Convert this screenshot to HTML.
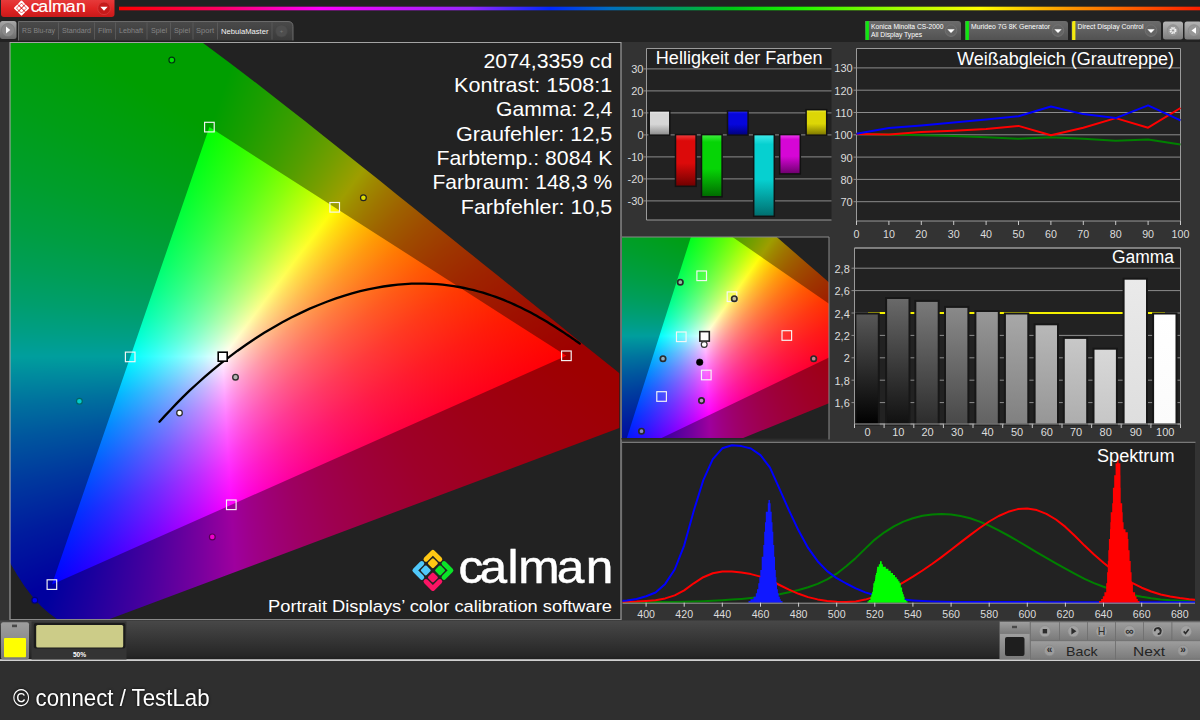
<!DOCTYPE html>
<html lang="de"><head><meta charset="utf-8"><title>Calman</title>
<style>
html,body{margin:0;padding:0;}
body{width:1200px;height:720px;overflow:hidden;background:#333;position:relative;font-family:'Liberation Sans', sans-serif;}
#c1,#c2,svg#ov{position:absolute;}
#c1{left:10px;top:43px;width:610px;height:576px;background-color:#fff;background-image:conic-gradient(from 0deg at 41.90px 541.57px,#00ffff 0deg,#00ffff 19.026deg,#2fffff 23.5deg,#60ffff 27.5deg,#8bffff 30.5deg,#bdffff 33.5deg,#edffff 36deg,#fffeff 36.888deg,#ffdeff 38.5deg,#ffbdff 40.5deg,#ff9aff 43deg,#ff79ff 46deg,#ff5aff 49.5deg,#ff3aff 54deg,#ff1cff 59.5deg,#ff00ff 66.067deg,#ff00ff 198.966deg,#0000ff 198.996deg,#0000ff 246.037deg,#00ffff 246.067deg,#00ffff 360deg),conic-gradient(from 0deg at 199.40px 84.08px,#00ff00 0deg,#00ff00 18.966deg,#ffff00 18.996deg,#ffff01 123deg,#ffff26 138.5deg,#ffff45 149deg,#ffff63 156.5deg,#ffff81 162.5deg,#ffff9e 167deg,#ffffbf 171deg,#ffffdd 174deg,#ffffff 176.702deg,#bfffff 181.5deg,#78ffff 187.5deg,#2dffff 194.5deg,#00ffff 199.026deg,#00ffff 302.647deg,#00ff00 302.677deg,#00ff00 360deg),conic-gradient(from 0deg at 556.40px 312.82px,#ffff00 0deg,#ffff00 66.067deg,#ff0000 66.5deg,#ff0000 122.617deg,#ff00ff 122.647deg,#ff01ff 246.067deg,#ff2eff 252deg,#ff5cff 257deg,#ff8bff 261.5deg,#ffb6ff 265deg,#ffe2ff 268deg,#fffffe 269.894deg,#ffffd6 272.5deg,#ffffb0 275.5deg,#ffff8c 279deg,#ffff6a 283deg,#ffff48 288deg,#ffff24 294.5deg,#ffff00 302.677deg,#ffff00 360deg);background-blend-mode:darken;}
#c2{left:622px;top:237px;width:207px;height:201px;background-color:#fff;background-image:conic-gradient(from 0deg at -1.39px 220.66px,#00ffff 0deg,#00ffff 17.699deg,#30ffff 22deg,#5dffff 25.5deg,#8affff 28.5deg,#bdffff 31.5deg,#efffff 34deg,#fffeff 34.778deg,#ffdbff 36.5deg,#ffbaff 38.5deg,#ff98ff 41deg,#ff77ff 44deg,#ff58ff 47.5deg,#ff39ff 52deg,#ff1cff 57.5deg,#ff00ff 64.374deg,#ff00ff 197.639deg,#0000ff 197.669deg,#0000ff 244.344deg,#00ffff 244.374deg,#00ffff 360deg),conic-gradient(from 0deg at 76.41px -23.58px,#00ff00 0deg,#00ff00 17.639deg,#ffff00 17.669deg,#ffff01 125deg,#ffff22 139.5deg,#ffff40 149.5deg,#ffff5e 157deg,#ffff7a 162.5deg,#ffff97 167deg,#ffffb3 170.5deg,#ffffd2 173.5deg,#fffff2 176deg,#ffffff 176.95deg,#bdffff 181.5deg,#77ffff 187deg,#2cffff 193.5deg,#00ffff 197.699deg,#00ffff 304.699deg,#00ff00 304.729deg,#00ff00 360deg),conic-gradient(from 0deg at 252.77px 98.54px,#ffff00 0deg,#ffff00 64.374deg,#ff0000 64.5deg,#ff0000 124.669deg,#ff00ff 124.699deg,#ff00ff 244.374deg,#ff31ff 251deg,#ff60ff 256.5deg,#ff8dff 261deg,#ffbbff 265deg,#ffebff 268.5deg,#fffffe 269.883deg,#ffffd9 272.5deg,#ffffb5 275.5deg,#ffff92 279deg,#ffff6e 283.5deg,#ffff4a 289deg,#ffff25 296deg,#ffff00 304.729deg,#ffff00 360deg);background-blend-mode:darken;}
svg#ov{left:0;top:0;}
svg text{font-family:'Liberation Sans', sans-serif;}
</style></head>
<body>
<div id="c1"></div><div id="c2"></div>
<svg id="ov" width="1200" height="720" viewBox="0 0 1200 720"><defs><clipPath id="clipA"><rect x="10" y="43" width="610" height="576"/></clipPath><clipPath id="clipB"><rect x="622" y="237" width="207" height="201"/></clipPath><linearGradient id="gred" x1="0" y1="0" x2="0" y2="1"><stop offset="0" stop-color="#e63a3a"/><stop offset="0.5" stop-color="#e02424"/><stop offset="1" stop-color="#c81a1a"/></linearGradient><linearGradient id="rainbow" gradientUnits="userSpaceOnUse" x1="119" y1="0" x2="1200" y2="0"><stop offset="0" stop-color="#ff0000"/><stop offset="0.093" stop-color="#ff0064"/><stop offset="0.186" stop-color="#ff00ff"/><stop offset="0.325" stop-color="#9628ff"/><stop offset="0.399" stop-color="#0028ff"/><stop offset="0.454" stop-color="#006ebe"/><stop offset="0.496" stop-color="#008c82"/><stop offset="0.568" stop-color="#00c814"/><stop offset="0.63" stop-color="#1ef500"/><stop offset="0.72" stop-color="#a0ff00"/><stop offset="0.796" stop-color="#ffff00"/><stop offset="0.88" stop-color="#ff9600"/><stop offset="1" stop-color="#ff1e00"/></linearGradient><linearGradient id="gbtn" x1="0" y1="0" x2="0" y2="1"><stop offset="0" stop-color="#a8a8a8"/><stop offset="1" stop-color="#6a6a6a"/></linearGradient><linearGradient id="gtab" x1="0" y1="0" x2="0" y2="1"><stop offset="0" stop-color="#4a4a4a"/><stop offset="1" stop-color="#3a3a3a"/></linearGradient><linearGradient id="gbtn2" x1="0" y1="0" x2="0" y2="1"><stop offset="0" stop-color="#b6b6b6"/><stop offset="1" stop-color="#7c7c7c"/></linearGradient><linearGradient id="gdd" x1="0" y1="0" x2="0" y2="1"><stop offset="0" stop-color="#6c6c6c"/><stop offset="1" stop-color="#525252"/></linearGradient><linearGradient id="hbw" x1="0" y1="0" x2="0" y2="1"><stop offset="0" stop-color="#f2f2f2"/><stop offset="0.12" stop-color="#d6d6d6"/><stop offset="0.55" stop-color="#d6d6d6"/><stop offset="1" stop-color="#8a8a8a"/></linearGradient><linearGradient id="hbr" x1="0" y1="0" x2="0" y2="1"><stop offset="0" stop-color="#f04040"/><stop offset="0.12" stop-color="#dc0a0a"/><stop offset="0.55" stop-color="#dc0a0a"/><stop offset="1" stop-color="#6e0000"/></linearGradient><linearGradient id="hbg" x1="0" y1="0" x2="0" y2="1"><stop offset="0" stop-color="#40ee40"/><stop offset="0.12" stop-color="#06d406"/><stop offset="0.55" stop-color="#06d406"/><stop offset="1" stop-color="#006a00"/></linearGradient><linearGradient id="hbb" x1="0" y1="0" x2="0" y2="1"><stop offset="0" stop-color="#3030f0"/><stop offset="0.12" stop-color="#0606dc"/><stop offset="0.55" stop-color="#0606dc"/><stop offset="1" stop-color="#000078"/></linearGradient><linearGradient id="hbc" x1="0" y1="0" x2="0" y2="1"><stop offset="0" stop-color="#40eaea"/><stop offset="0.12" stop-color="#06d0d0"/><stop offset="0.55" stop-color="#06d0d0"/><stop offset="1" stop-color="#006e6e"/></linearGradient><linearGradient id="hbm" x1="0" y1="0" x2="0" y2="1"><stop offset="0" stop-color="#f040f0"/><stop offset="0.12" stop-color="#d606d6"/><stop offset="0.55" stop-color="#d606d6"/><stop offset="1" stop-color="#6c006c"/></linearGradient><linearGradient id="hby" x1="0" y1="0" x2="0" y2="1"><stop offset="0" stop-color="#f0f040"/><stop offset="0.12" stop-color="#dcd606"/><stop offset="0.55" stop-color="#dcd606"/><stop offset="1" stop-color="#7a7400"/></linearGradient><linearGradient id="gb0" x1="0" y1="0" x2="0" y2="1"><stop offset="0" stop-color="#585858"/><stop offset="1" stop-color="#000000"/></linearGradient><linearGradient id="gb1" x1="0" y1="0" x2="0" y2="1"><stop offset="0" stop-color="#6a6a6a"/><stop offset="1" stop-color="#101010"/></linearGradient><linearGradient id="gb2" x1="0" y1="0" x2="0" y2="1"><stop offset="0" stop-color="#7a7a7a"/><stop offset="1" stop-color="#2c2c2c"/></linearGradient><linearGradient id="gb3" x1="0" y1="0" x2="0" y2="1"><stop offset="0" stop-color="#8a8a8a"/><stop offset="1" stop-color="#484848"/></linearGradient><linearGradient id="gb4" x1="0" y1="0" x2="0" y2="1"><stop offset="0" stop-color="#989898"/><stop offset="1" stop-color="#626262"/></linearGradient><linearGradient id="gb5" x1="0" y1="0" x2="0" y2="1"><stop offset="0" stop-color="#a8a8a8"/><stop offset="1" stop-color="#808080"/></linearGradient><linearGradient id="gb6" x1="0" y1="0" x2="0" y2="1"><stop offset="0" stop-color="#b8b8b8"/><stop offset="1" stop-color="#969696"/></linearGradient><linearGradient id="gb7" x1="0" y1="0" x2="0" y2="1"><stop offset="0" stop-color="#c8c8c8"/><stop offset="1" stop-color="#adadad"/></linearGradient><linearGradient id="gb8" x1="0" y1="0" x2="0" y2="1"><stop offset="0" stop-color="#d8d8d8"/><stop offset="1" stop-color="#c6c6c6"/></linearGradient><linearGradient id="gb9" x1="0" y1="0" x2="0" y2="1"><stop offset="0" stop-color="#eaeaea"/><stop offset="1" stop-color="#dedede"/></linearGradient><linearGradient id="gb10" x1="0" y1="0" x2="0" y2="1"><stop offset="0" stop-color="#ffffff"/><stop offset="1" stop-color="#fbfbfb"/></linearGradient><clipPath id="clipS"><rect x="622.5" y="443" width="572.5" height="160.7"/></clipPath><linearGradient id="gbar" x1="0" y1="0" x2="0" y2="1"><stop offset="0" stop-color="#484848"/><stop offset="0.9" stop-color="#262626"/><stop offset="1" stop-color="#1e1e1e"/></linearGradient><linearGradient id="gbt" x1="0" y1="0" x2="0" y2="1"><stop offset="0" stop-color="#9e9e9e"/><stop offset="1" stop-color="#7a7a7a"/></linearGradient></defs><rect x="0" y="0" width="1200" height="42" fill="#222"/>
<g clip-path="url(#clipA)"><path d="M9 42 H621 V620 H9 ZM209.4 127.1 L566.4 355.8 L51.9 584.6Z" fill="#000" fill-opacity="0.38" fill-rule="evenodd"/><path d="M9 42 H621 V620 H9 ZM77.2 631.2 L77.2 631.2 L77.1 631.2 L77.0 631.2 L76.9 631.2 L76.8 631.2 L76.6 631.2 L76.5 631.3 L76.4 631.3 L76.3 631.4 L76.1 631.4 L75.8 631.3 L75.6 631.3 L75.4 631.3 L75.1 631.3 L74.8 631.2 L74.4 631.1 L73.8 630.8 L73.2 630.5 L72.5 630.1 L71.7 629.6 L70.7 628.9 L69.6 628.2 L68.4 627.2 L67.0 626.2 L65.4 625.0 L63.6 623.7 L61.4 622.2 L58.9 620.4 L56.1 618.4 L52.9 616.1 L49.4 613.4 L45.6 610.2 L41.4 606.4 L36.7 601.6 L31.2 595.0 L24.7 586.4 L17.5 575.5 L9.5 561.8 L0.4 544.5 L-9.7 523.0 L-21.1 496.9 L-33.5 465.3 L-45.7 428.3 L-57.9 385.5 L-69.9 337.5 L-81.0 285.8 L-90.1 232.5 L-97.0 179.2 L-101.0 128.1 L-101.5 80.6 L-98.2 37.4 L-91.0 -0.2 L-79.6 -30.4 L-64.8 -52.5 L-47.0 -65.5 L-27.6 -71.0 L-6.9 -69.8 L14.3 -64.6 L35.8 -56.6 L56.9 -47.3 L77.2 -37.3 L96.9 -26.8 L116.4 -15.5 L135.5 -3.7 L154.6 8.8 L173.5 21.8 L192.3 35.2 L211.1 48.9 L229.9 62.9 L248.6 77.2 L267.4 91.7 L286.2 106.4 L304.9 121.1 L323.6 135.9 L342.2 150.7 L360.7 165.4 L379.0 180.1 L397.1 194.7 L415.0 209.1 L432.5 223.2 L449.7 237.0 L466.4 250.4 L482.6 263.4 L498.3 276.0 L513.3 288.1 L527.5 299.5 L540.5 310.0 L552.8 319.8 L564.3 329.1 L575.0 337.7 L584.7 345.4 L593.5 352.4 L601.3 358.8 L608.5 364.5 L614.8 369.6 L620.5 374.2 L625.5 378.2 L630.0 381.8 L634.0 385.0 L637.7 388.0 L641.1 390.7 L644.1 393.2 L646.9 395.4 L649.4 397.4 L651.6 399.2 L653.6 400.8 L655.2 402.1 L656.7 403.3 L658.0 404.3 L659.1 405.2 L660.0 406.0 L660.9 406.6 L661.5 407.1 L662.0 407.6 L662.5 408.0 L663.0 408.3 L663.4 408.7 L663.8 409.0 L664.1 409.3 L664.5 409.6 L664.8 409.8 L665.1 410.1 L665.4 410.3 L665.5 410.4 L665.6 410.5 L665.7 410.5 L665.8 410.6 L665.8 410.6Z" fill="#222" fill-rule="evenodd"/><path d="M579.8 343.6 L578.0 342.3 L576.1 341.0 L574.2 339.6 L572.2 338.3 L570.3 336.9 L568.2 335.5 L566.1 334.1 L564.0 332.6 L561.8 331.2 L559.5 329.7 L557.2 328.2 L554.9 326.7 L552.5 325.2 L550.0 323.7 L547.4 322.1 L544.8 320.5 L542.2 319.0 L539.4 317.4 L536.6 315.8 L533.7 314.2 L530.7 312.6 L527.6 311.0 L524.5 309.4 L521.3 307.8 L517.9 306.2 L514.5 304.6 L511.0 303.0 L507.3 301.5 L503.6 299.9 L499.7 298.4 L495.7 296.9 L491.6 295.5 L487.4 294.1 L483.0 292.7 L478.5 291.5 L473.9 290.2 L469.0 289.1 L464.1 288.0 L459.0 287.0 L453.7 286.1 L448.2 285.4 L442.6 284.7 L436.8 284.2 L430.8 283.8 L424.6 283.6 L418.2 283.6 L411.6 283.7 L404.9 284.1 L397.9 284.7 L390.7 285.5 L383.4 286.5 L375.8 287.8 L368.1 289.4 L360.2 291.2 L352.0 293.4 L343.8 295.8 L335.3 298.6 L326.8 301.7 L318.0 305.2 L309.2 308.9 L300.3 313.1 L291.3 317.5 L282.3 322.3 L273.3 327.4 L264.2 332.8 L255.3 338.5 L246.4 344.5 L237.6 350.7 L229.0 357.1 L220.5 363.7 L212.3 370.4 L204.4 377.2 L196.8 384.0 L189.5 390.7 L182.6 397.4 L176.2 403.9 L170.2 410.2 L164.6 416.1 L159.5 421.7" fill="none" stroke="#000" stroke-width="2.3" stroke-linecap="round"/></g>
<g clip-path="url(#clipB)"><path d="M621 236 H830 V439 H621 ZM698.4 213.4 L874.8 335.5 L620.6 457.7Z" fill="#000" fill-opacity="0.38" fill-rule="evenodd"/><path d="M621 236 H830 V439 H621 ZM633.1 482.6 L633.1 482.5 L633.1 482.5 L633.0 482.6 L633.0 482.6 L632.9 482.6 L632.8 482.6 L632.8 482.6 L632.7 482.6 L632.6 482.6 L632.5 482.6 L632.4 482.6 L632.3 482.6 L632.2 482.6 L632.1 482.6 L631.9 482.6 L631.7 482.5 L631.4 482.4 L631.1 482.2 L630.8 482.0 L630.4 481.7 L629.9 481.3 L629.4 480.9 L628.8 480.4 L628.1 479.9 L627.3 479.3 L626.4 478.6 L625.3 477.7 L624.0 476.8 L622.7 475.7 L621.1 474.5 L619.4 473.1 L617.5 471.4 L615.4 469.3 L613.1 466.8 L610.4 463.3 L607.2 458.7 L603.6 452.8 L599.6 445.5 L595.2 436.3 L590.2 424.8 L584.5 410.9 L578.4 394.0 L572.4 374.2 L566.3 351.4 L560.4 325.8 L555.0 298.1 L550.4 269.7 L547.0 241.3 L545.1 214.0 L544.8 188.6 L546.4 165.6 L550.0 145.5 L555.7 129.3 L563.0 117.5 L571.7 110.6 L581.3 107.7 L591.6 108.3 L602.0 111.1 L612.7 115.3 L623.1 120.3 L633.1 125.6 L642.8 131.3 L652.4 137.3 L661.9 143.6 L671.3 150.3 L680.7 157.2 L690.0 164.3 L699.2 171.7 L708.5 179.2 L717.8 186.8 L727.1 194.6 L736.3 202.4 L745.6 210.2 L754.8 218.1 L764.0 226.0 L773.1 233.9 L782.2 241.7 L791.1 249.5 L800.0 257.2 L808.6 264.7 L817.1 272.1 L825.4 279.3 L833.4 286.2 L841.1 292.9 L848.5 299.4 L855.5 305.5 L862.0 311.1 L868.0 316.3 L873.7 321.3 L879.0 325.9 L883.8 330.0 L888.1 333.7 L892.0 337.1 L895.6 340.2 L898.7 342.9 L901.5 345.3 L904.0 347.5 L906.2 349.4 L908.2 351.1 L910.0 352.7 L911.6 354.2 L913.2 355.5 L914.5 356.7 L915.8 357.7 L916.9 358.7 L917.8 359.5 L918.7 360.2 L919.4 360.9 L920.0 361.4 L920.6 361.9 L921.0 362.3 L921.4 362.7 L921.8 362.9 L922.0 363.2 L922.3 363.4 L922.5 363.6 L922.7 363.8 L922.9 363.9 L923.0 364.1 L923.2 364.2 L923.4 364.4 L923.6 364.5 L923.7 364.6 L923.7 364.7 L923.8 364.7 L923.8 364.8 L923.9 364.8 L923.9 364.8Z" fill="#222" fill-rule="evenodd"/></g>
<rect x="204.6" y="122.3" width="9.6" height="9.6" fill="none" stroke="#f6f6f6" stroke-width="1.15"/>
<rect x="561.6" y="351.0" width="9.6" height="9.6" fill="none" stroke="#f6f6f6" stroke-width="1.15"/>
<rect x="47.1" y="579.8" width="9.6" height="9.6" fill="none" stroke="#f6f6f6" stroke-width="1.15"/>
<rect x="329.9" y="202.5" width="9.6" height="9.6" fill="none" stroke="#f6f6f6" stroke-width="1.15"/>
<rect x="125.4" y="352.1" width="9.6" height="9.6" fill="none" stroke="#f6f6f6" stroke-width="1.15"/>
<rect x="226.5" y="500.0" width="9.6" height="9.6" fill="none" stroke="#f6f6f6" stroke-width="1.15"/>
<rect x="218.2" y="352.2" width="9" height="9" fill="#fff" stroke="#000" stroke-width="1.6"/>
<circle cx="171.8" cy="60.1" r="2.9" fill="#0d0" stroke="#031" stroke-width="1.2"/>
<circle cx="363.4" cy="197.7" r="2.9" fill="#dd0" stroke="#222" stroke-width="1.2"/>
<circle cx="79.4" cy="401.3" r="2.9" fill="#0cc" stroke="#066" stroke-width="1.2"/>
<circle cx="34.8" cy="600.2" r="2.9" fill="#00e" stroke="#007" stroke-width="1.2"/>
<circle cx="212.3" cy="536.9" r="2.9" fill="#e0c" stroke="#505" stroke-width="1.2"/>
<circle cx="235.5" cy="377.2" r="2.8" fill="#b4b4b4" stroke="#303030" stroke-width="1.4"/>
<circle cx="179.5" cy="413.0" r="2.8" fill="#fff" stroke="#303030" stroke-width="1.3"/>
<rect x="696.9" y="271.0" width="9.6" height="9.6" fill="none" stroke="#f6f6f6" stroke-width="1.15"/>
<rect x="727.2" y="291.9" width="9.6" height="9.6" fill="none" stroke="#f6f6f6" stroke-width="1.15"/>
<rect x="782.0" y="330.7" width="9.6" height="9.6" fill="none" stroke="#f6f6f6" stroke-width="1.15"/>
<rect x="676.5" y="332.0" width="9.6" height="9.6" fill="none" stroke="#f6f6f6" stroke-width="1.15"/>
<rect x="656.8" y="391.7" width="9.6" height="9.6" fill="none" stroke="#f6f6f6" stroke-width="1.15"/>
<rect x="701.5" y="370.2" width="9.6" height="9.6" fill="none" stroke="#f6f6f6" stroke-width="1.15"/>
<rect x="699.8" y="331.6" width="9.5" height="9.5" fill="#fff" stroke="#222" stroke-width="1.6"/>
<circle cx="680.3" cy="282.2" r="2.7" fill="rgba(175,175,175,0.75)" stroke="#2a2a2a" stroke-width="1.7"/>
<circle cx="734.3" cy="298.7" r="2.7" fill="rgba(175,175,175,0.75)" stroke="#2a2a2a" stroke-width="1.7"/>
<circle cx="663.0" cy="358.7" r="2.7" fill="rgba(175,175,175,0.75)" stroke="#2a2a2a" stroke-width="1.7"/>
<circle cx="701.5" cy="400.6" r="2.7" fill="rgba(175,175,175,0.75)" stroke="#2a2a2a" stroke-width="1.7"/>
<circle cx="813.7" cy="358.7" r="2.7" fill="rgba(175,175,175,0.75)" stroke="#2a2a2a" stroke-width="1.7"/>
<circle cx="641.5" cy="431.2" r="2.7" fill="rgba(175,175,175,0.75)" stroke="#2a2a2a" stroke-width="1.7"/>
<circle cx="704.2" cy="344.5" r="2.9" fill="#fff" stroke="#333" stroke-width="1.2"/>
<circle cx="699.7" cy="362.2" r="3.3" fill="#000" stroke="#000" stroke-width="0.5"/>
<path d="M620 43 V620" fill="none" stroke="#222" stroke-width="1.4"/>
<path d="M10 620 V42.5 H621 V620" fill="none" stroke="#a4a4a4" stroke-width="1.1"/>
<path d="M10 619.5 H621" fill="none" stroke="#8a8a8a" stroke-width="1"/>
<path d="M621.5 438.8 H829.5" fill="none" stroke="#262626" stroke-width="1.6"/>
<path d="M622 237 H829 V439.5" fill="none" stroke="#8a8a8a" stroke-width="1"/>
<text x="483.5" y="67.7" font-size="20.3" fill="#fff" textLength="128.8" lengthAdjust="spacingAndGlyphs">2074,3359 cd</text>
<text x="454.1" y="92.0" font-size="20.3" fill="#fff" textLength="158.2" lengthAdjust="spacingAndGlyphs">Kontrast: 1508:1</text>
<text x="496.0" y="116.3" font-size="20.3" fill="#fff" textLength="116.3" lengthAdjust="spacingAndGlyphs">Gamma: 2,4</text>
<text x="456.0" y="140.6" font-size="20.3" fill="#fff" textLength="156.3" lengthAdjust="spacingAndGlyphs">Graufehler: 12,5</text>
<text x="436.5" y="164.9" font-size="20.3" fill="#fff" textLength="175.8" lengthAdjust="spacingAndGlyphs">Farbtemp.: 8084 K</text>
<text x="432.5" y="189.2" font-size="20.3" fill="#fff" textLength="179.8" lengthAdjust="spacingAndGlyphs">Farbraum: 148,3 %</text>
<text x="460.8" y="213.5" font-size="20.3" fill="#fff" textLength="151.5" lengthAdjust="spacingAndGlyphs">Farbfehler: 10,5</text>
<rect x="429.01" y="559.38" width="7.77" height="7.77" rx="1.36" fill="#ffc814" transform="rotate(45 432.90 563.26)"/><path d="M439.83 559.27 L432.90 552.34 L425.97 559.27" fill="none" stroke="#ffc814" stroke-width="4.83" stroke-linecap="round" stroke-linejoin="round"/><rect x="436.15" y="566.51" width="7.77" height="7.77" rx="1.36" fill="#0ae428" transform="rotate(45 440.04 570.40)"/><path d="M444.03 577.33 L450.96 570.40 L444.03 563.47" fill="none" stroke="#0ae428" stroke-width="4.83" stroke-linecap="round" stroke-linejoin="round"/><rect x="429.01" y="573.65" width="7.77" height="7.77" rx="1.36" fill="#fa1464" transform="rotate(45 432.90 577.54)"/><path d="M425.97 581.53 L432.90 588.46 L439.83 581.53" fill="none" stroke="#fa1464" stroke-width="4.83" stroke-linecap="round" stroke-linejoin="round"/><rect x="421.88" y="566.51" width="7.77" height="7.77" rx="1.36" fill="#50c8fa" transform="rotate(45 425.76 570.40)"/><path d="M421.77 563.47 L414.84 570.40 L421.77 577.33" fill="none" stroke="#50c8fa" stroke-width="4.83" stroke-linecap="round" stroke-linejoin="round"/>
<text transform="translate(460.3 582.6) scale(1.09 1.03)" x="-1.6 17.6 43.3 53.2 88.4 115.2" y="0" font-size="45.5" fill="#fff" stroke="#fff" stroke-width="0.5">calman</text>
<text x="268.0" y="611.7" font-size="17.2" fill="#fff" textLength="344.0" lengthAdjust="spacingAndGlyphs">Portrait Displays’ color calibration software</text>
<rect x="119" y="6.7" width="1081" height="3.6" fill="url(#rainbow)"/>
<path d="M1 0 H114.5 V14 Q114.5 17 111.5 17 H4 Q1 17 1 14 Z" fill="url(#gred)"/>
<rect x="20.08" y="4.06" width="2.85" height="2.85" rx="0.50" fill="#fff" transform="rotate(45 21.50 5.48)"/><path d="M24.04 4.02 L21.50 1.48 L18.96 4.02" fill="none" stroke="#fff" stroke-width="1.77" stroke-linecap="round" stroke-linejoin="round"/><rect x="22.69" y="6.68" width="2.85" height="2.85" rx="0.50" fill="#fff" transform="rotate(45 24.12 8.10)"/><path d="M25.58 10.64 L28.12 8.10 L25.58 5.56" fill="none" stroke="#fff" stroke-width="1.77" stroke-linecap="round" stroke-linejoin="round"/><rect x="20.08" y="9.29" width="2.85" height="2.85" rx="0.50" fill="#fff" transform="rotate(45 21.50 10.72)"/><path d="M18.96 12.18 L21.50 14.72 L24.04 12.18" fill="none" stroke="#fff" stroke-width="1.77" stroke-linecap="round" stroke-linejoin="round"/><rect x="17.46" y="6.68" width="2.85" height="2.85" rx="0.50" fill="#fff" transform="rotate(45 18.88 8.10)"/><path d="M17.42 5.56 L14.88 8.10 L17.42 10.64" fill="none" stroke="#fff" stroke-width="1.77" stroke-linecap="round" stroke-linejoin="round"/>
<text transform="translate(31.3 11.75) scale(0.389 0.36)" x="-1.6 17.6 43.3 53.2 88.4 115.2" y="0" font-size="45.5" fill="#fff" stroke="#fff" stroke-width="0.5">calman</text>
<circle cx="104" cy="8.3" r="6.3" fill="#c61a1a" stroke="#d84040" stroke-width="0.7"/>
<path d="M100.3 6.8 H107.7 L104 10.8 Z" fill="#fff"/>
<rect x="0" y="21" width="16.5" height="18" rx="2.5" fill="url(#gbtn)"/>
<circle cx="8" cy="30" r="6.5" fill="#8a8a8a" stroke="#777" stroke-width="0.6"/>
<path d="M6 26.5 V33.5 L10.3 30 Z" fill="#fff"/>
<path d="M18.5 40.5 V21.5 H288 Q293 21.5 293 26.5 V40.5 Z" fill="url(#gtab)"/>
<path d="M18.5 40.5 V21.5 H288 Q293 21.5 293 26.5 V40.5" fill="none" stroke="#727272" stroke-width="0.9"/>
<text x="22.0" y="33.3" font-size="7" fill="#858585" textLength="33.0" lengthAdjust="spacingAndGlyphs">RS Blu-ray</text>
<text x="62.0" y="33.3" font-size="7" fill="#858585" textLength="29.0" lengthAdjust="spacingAndGlyphs">Standard</text>
<text x="98.0" y="33.3" font-size="7" fill="#858585" textLength="14.0" lengthAdjust="spacingAndGlyphs">Film</text>
<text x="119.0" y="33.3" font-size="7" fill="#858585" textLength="24.0" lengthAdjust="spacingAndGlyphs">Lebhaft</text>
<text x="151.0" y="33.3" font-size="7" fill="#858585" textLength="16.0" lengthAdjust="spacingAndGlyphs">Spiel</text>
<text x="174.0" y="33.3" font-size="7" fill="#858585" textLength="16.0" lengthAdjust="spacingAndGlyphs">Spiel</text>
<text x="196.0" y="33.3" font-size="7" fill="#858585" textLength="18.0" lengthAdjust="spacingAndGlyphs">Sport</text>
<text x="221.0" y="33.5" font-size="7.2" fill="#f4f4f4" textLength="47.5" lengthAdjust="spacingAndGlyphs">NebulaMaster</text>
<path d="M58.5 22.5 V39.5" stroke="#5e5e5e" stroke-width="0.8"/>
<path d="M94.5 22.5 V39.5" stroke="#5e5e5e" stroke-width="0.8"/>
<path d="M115.5 22.5 V39.5" stroke="#5e5e5e" stroke-width="0.8"/>
<path d="M147 22.5 V39.5" stroke="#5e5e5e" stroke-width="0.8"/>
<path d="M170.5 22.5 V39.5" stroke="#5e5e5e" stroke-width="0.8"/>
<path d="M193 22.5 V39.5" stroke="#5e5e5e" stroke-width="0.8"/>
<path d="M217.5 22.5 V39.5" stroke="#5e5e5e" stroke-width="0.8"/>
<path d="M272 22.5 V39.5" stroke="#5e5e5e" stroke-width="0.8"/>
<circle cx="281.5" cy="31" r="6" fill="#4e4e4e" stroke="#474747" stroke-width="0.6"/>
<text x="279.7" y="33.3" font-size="6" fill="#777">+</text>
<path d="M865 40 V21 H958 Q961 21 961 24 V40 Z" fill="url(#gdd)"/><path d="M865.6 40 V22.5 Q865.6 21 867.2 21 H868.9 V40 Z" fill="#10e610"/><text x="871.0" y="28.8" font-size="7" fill="#fff" textLength="72.5" lengthAdjust="spacingAndGlyphs">Konica Minolta CS-2000</text><text x="871.0" y="37.3" font-size="7" fill="#fff" textLength="51.0" lengthAdjust="spacingAndGlyphs">All Display Types</text><circle cx="951" cy="30.6" r="5.8" fill="#646464" stroke="#787878" stroke-width="0.7"/><path d="M947.3 29.3 h7.4 l-3.7 3.7 Z" fill="#fff"/>
<path d="M965 40 V21 H1065 Q1068 21 1068 24 V40 Z" fill="url(#gdd)"/><path d="M965.6 40 V22.5 Q965.6 21 967.2 21 H968.9 V40 Z" fill="#10e610"/><text x="971.0" y="28.8" font-size="7" fill="#fff" textLength="79.0" lengthAdjust="spacingAndGlyphs">Murideo 7G 8K Generator</text><circle cx="1058" cy="30.6" r="5.8" fill="#646464" stroke="#787878" stroke-width="0.7"/><path d="M1054.3 29.3 h7.4 l-3.7 3.7 Z" fill="#fff"/>
<path d="M1071.5 40 V21 H1158 Q1161 21 1161 24 V40 Z" fill="url(#gdd)"/><path d="M1072.1 40 V22.5 Q1072.1 21 1073.7 21 H1075.4 V40 Z" fill="#f4ea10"/><text x="1077.5" y="28.8" font-size="7" fill="#fff" textLength="66.0" lengthAdjust="spacingAndGlyphs">Direct Display Control</text><circle cx="1151" cy="30.6" r="5.8" fill="#646464" stroke="#787878" stroke-width="0.7"/><path d="M1147.3 29.3 h7.4 l-3.7 3.7 Z" fill="#fff"/>
<rect x="1163" y="21.5" width="20" height="18" rx="2.5" fill="url(#gbtn2)"/>
<circle cx="1173" cy="30.5" r="5.8" fill="#979797" stroke="#858585" stroke-width="0.6"/>
<circle cx="1173" cy="30.5" r="2.6" fill="none" stroke="#f2f2f2" stroke-width="1.8" stroke-dasharray="1.4 0.65"/><circle cx="1173" cy="30.5" r="1.7" fill="none" stroke="#f2f2f2" stroke-width="0.9"/>
<rect x="1184.5" y="21.5" width="17" height="18" rx="2.5" fill="url(#gbtn2)"/>
<circle cx="1194" cy="30.5" r="5.8" fill="#979797" stroke="#858585" stroke-width="0.6"/>
<path d="M1196 27.3 V33.7 L1191.5 30.5 Z" fill="#fff"/>
<rect x="646.5" y="48.5" width="185" height="171.5" fill="#222"/>
<path d="M643.5 68.9 H831.5" stroke="#8c8c8c" stroke-width="1"/>
<text x="643.5" y="73.4" font-size="11" fill="#dcdcdc" text-anchor="end">30</text>
<path d="M643.5 90.9 H831.5" stroke="#8c8c8c" stroke-width="1"/>
<text x="643.5" y="95.4" font-size="11" fill="#dcdcdc" text-anchor="end">20</text>
<path d="M643.5 112.9 H831.5" stroke="#8c8c8c" stroke-width="1"/>
<text x="643.5" y="117.4" font-size="11" fill="#dcdcdc" text-anchor="end">10</text>
<path d="M643.5 134.9 H831.5" stroke="#8c8c8c" stroke-width="1"/>
<text x="643.5" y="139.4" font-size="11" fill="#dcdcdc" text-anchor="end">0</text>
<path d="M643.5 156.9 H831.5" stroke="#8c8c8c" stroke-width="1"/>
<text x="643.5" y="161.4" font-size="11" fill="#dcdcdc" text-anchor="end">-10</text>
<path d="M643.5 178.9 H831.5" stroke="#8c8c8c" stroke-width="1"/>
<text x="643.5" y="183.4" font-size="11" fill="#dcdcdc" text-anchor="end">-20</text>
<path d="M643.5 200.9 H831.5" stroke="#8c8c8c" stroke-width="1"/>
<text x="643.5" y="205.4" font-size="11" fill="#dcdcdc" text-anchor="end">-30</text>
<path d="M831.5 48.5 H646.5 V220 H831.5" fill="none" stroke="#9a9a9a" stroke-width="1"/>
<rect x="649.2" y="110.9" width="20.6" height="24.3" fill="url(#hbw)" stroke="#121212" stroke-width="1.5"/>
<rect x="675.5" y="134.6" width="20.6" height="51.7" fill="url(#hbr)" stroke="#121212" stroke-width="1.5"/>
<rect x="701.5" y="134.6" width="20.6" height="62.2" fill="url(#hbg)" stroke="#121212" stroke-width="1.5"/>
<rect x="727.5" y="110.9" width="20.6" height="24.3" fill="url(#hbb)" stroke="#121212" stroke-width="1.5"/>
<rect x="753.7" y="134.6" width="20.6" height="81.7" fill="url(#hbc)" stroke="#121212" stroke-width="1.5"/>
<rect x="779.7" y="134.6" width="20.6" height="39.3" fill="url(#hbm)" stroke="#121212" stroke-width="1.5"/>
<rect x="806.1" y="109.7" width="20.6" height="25.5" fill="url(#hby)" stroke="#121212" stroke-width="1.5"/>
<text x="655.8" y="63.8" font-size="17.6" fill="#fff" textLength="166.7" lengthAdjust="spacingAndGlyphs">Helligkeit der Farben</text>
<rect x="856.5" y="48.5" width="324" height="172.5" fill="#222"/>
<path d="M853.5 67.9 H1180.5" stroke="#8c8c8c" stroke-width="1"/>
<text x="852.7" y="72.4" font-size="11" fill="#dcdcdc" text-anchor="end">130</text>
<path d="M853.5 90.2 H1180.5" stroke="#8c8c8c" stroke-width="1"/>
<text x="852.7" y="94.7" font-size="11" fill="#dcdcdc" text-anchor="end">120</text>
<path d="M853.5 112.5 H1180.5" stroke="#8c8c8c" stroke-width="1"/>
<text x="852.7" y="117.0" font-size="11" fill="#dcdcdc" text-anchor="end">110</text>
<path d="M853.5 134.8 H1180.5" stroke="#8c8c8c" stroke-width="1"/>
<text x="852.7" y="139.3" font-size="11" fill="#dcdcdc" text-anchor="end">100</text>
<path d="M853.5 157.1 H1180.5" stroke="#8c8c8c" stroke-width="1"/>
<text x="852.7" y="161.6" font-size="11" fill="#dcdcdc" text-anchor="end">90</text>
<path d="M853.5 179.4 H1180.5" stroke="#8c8c8c" stroke-width="1"/>
<text x="852.7" y="183.9" font-size="11" fill="#dcdcdc" text-anchor="end">80</text>
<path d="M853.5 201.7 H1180.5" stroke="#8c8c8c" stroke-width="1"/>
<text x="852.7" y="206.2" font-size="11" fill="#dcdcdc" text-anchor="end">70</text>
<path d="M856.5 48.5 H1180.5 V221 H856.5 Z" fill="none" stroke="#9a9a9a" stroke-width="1"/>
<path d="M856.5 221 V225" stroke="#c8c8c8" stroke-width="1"/>
<text x="856.5" y="237.6" font-size="10.7" fill="#dcdcdc" text-anchor="middle">0</text>
<path d="M888.9 221 V225" stroke="#c8c8c8" stroke-width="1"/>
<text x="888.9" y="237.6" font-size="10.7" fill="#dcdcdc" text-anchor="middle">10</text>
<path d="M921.3 221 V225" stroke="#c8c8c8" stroke-width="1"/>
<text x="921.3" y="237.6" font-size="10.7" fill="#dcdcdc" text-anchor="middle">20</text>
<path d="M953.7 221 V225" stroke="#c8c8c8" stroke-width="1"/>
<text x="953.7" y="237.6" font-size="10.7" fill="#dcdcdc" text-anchor="middle">30</text>
<path d="M986.1 221 V225" stroke="#c8c8c8" stroke-width="1"/>
<text x="986.1" y="237.6" font-size="10.7" fill="#dcdcdc" text-anchor="middle">40</text>
<path d="M1018.5 221 V225" stroke="#c8c8c8" stroke-width="1"/>
<text x="1018.5" y="237.6" font-size="10.7" fill="#dcdcdc" text-anchor="middle">50</text>
<path d="M1050.9 221 V225" stroke="#c8c8c8" stroke-width="1"/>
<text x="1050.9" y="237.6" font-size="10.7" fill="#dcdcdc" text-anchor="middle">60</text>
<path d="M1083.3 221 V225" stroke="#c8c8c8" stroke-width="1"/>
<text x="1083.3" y="237.6" font-size="10.7" fill="#dcdcdc" text-anchor="middle">70</text>
<path d="M1115.7 221 V225" stroke="#c8c8c8" stroke-width="1"/>
<text x="1115.7" y="237.6" font-size="10.7" fill="#dcdcdc" text-anchor="middle">80</text>
<path d="M1148.1 221 V225" stroke="#c8c8c8" stroke-width="1"/>
<text x="1148.1" y="237.6" font-size="10.7" fill="#dcdcdc" text-anchor="middle">90</text>
<path d="M1180.5 221 V225" stroke="#c8c8c8" stroke-width="1"/>
<text x="1180.5" y="237.6" font-size="10.7" fill="#dcdcdc" text-anchor="middle">100</text>
<path d="M856.5 134.1 L888.9 134.4 L921.3 135.2 L953.7 136.1 L986.1 137.3 L1018.5 138.8 L1050.9 137.3 L1083.3 138.8 L1115.7 140.8 L1148.1 139.5 L1180.5 144.6" fill="none" stroke="#008000" stroke-width="2" stroke-linejoin="round"/>
<path d="M856.5 134.1 L888.9 134.4 L921.3 132.1 L953.7 130.8 L986.1 129.0 L1018.5 125.9 L1050.9 135.2 L1083.3 127.7 L1115.7 118.1 L1148.1 127.7 L1180.5 108.0" fill="none" stroke="#ff0000" stroke-width="2" stroke-linejoin="round"/>
<path d="M856.5 133.7 L888.9 128.1 L921.3 125.4 L953.7 122.5 L986.1 119.6 L1018.5 116.3 L1050.9 106.5 L1083.3 114.1 L1115.7 118.1 L1148.1 105.4 L1180.5 120.3" fill="none" stroke="#0000ff" stroke-width="2" stroke-linejoin="round"/>
<text x="957.0" y="64.5" font-size="17.6" fill="#fff" textLength="217.0" lengthAdjust="spacingAndGlyphs">Weißabgleich (Grautreppe)</text>
<rect x="854.5" y="248" width="326" height="176" fill="#222"/>
<path d="M851.5 268.2 H1180.5" stroke="#8c8c8c" stroke-width="1"/>
<text x="849.8" y="272.7" font-size="11" fill="#dcdcdc" text-anchor="end">2,8</text>
<path d="M851.5 290.6 H1180.5" stroke="#8c8c8c" stroke-width="1"/>
<text x="849.8" y="295.1" font-size="11" fill="#dcdcdc" text-anchor="end">2,6</text>
<path d="M851.5 313.0 H1180.5" stroke="#8c8c8c" stroke-width="1"/>
<text x="849.8" y="317.5" font-size="11" fill="#dcdcdc" text-anchor="end">2,4</text>
<path d="M851.5 335.4 H1180.5" stroke="#8c8c8c" stroke-width="1"/>
<text x="849.8" y="339.9" font-size="11" fill="#dcdcdc" text-anchor="end">2,2</text>
<path d="M851.5 357.8 H1180.5" stroke="#8c8c8c" stroke-width="1"/>
<text x="849.8" y="362.3" font-size="11" fill="#dcdcdc" text-anchor="end">2</text>
<path d="M851.5 380.2 H1180.5" stroke="#8c8c8c" stroke-width="1"/>
<text x="849.8" y="384.7" font-size="11" fill="#dcdcdc" text-anchor="end">1,8</text>
<path d="M851.5 402.6 H1180.5" stroke="#8c8c8c" stroke-width="1"/>
<text x="849.8" y="407.1" font-size="11" fill="#dcdcdc" text-anchor="end">1,6</text>
<path d="M854.5 248 H1180.5 V424 H854.5 Z" fill="none" stroke="#9a9a9a" stroke-width="1"/>
<path d="M868 313 H1165" stroke="#f4f000" stroke-width="2"/>
<rect x="855.4" y="313.5" width="23.4" height="111.0" fill="url(#gb0)" stroke="#171717" stroke-width="2"/>
<text x="867.6" y="436.3" font-size="11" fill="#dcdcdc" text-anchor="middle">0</text>
<rect x="886.1" y="298.0" width="23.4" height="126.5" fill="url(#gb1)" stroke="#171717" stroke-width="2"/>
<text x="898.3" y="436.3" font-size="11" fill="#dcdcdc" text-anchor="middle">10</text>
<rect x="915.3" y="300.9" width="23.4" height="123.6" fill="url(#gb2)" stroke="#171717" stroke-width="2"/>
<text x="927.5" y="436.3" font-size="11" fill="#dcdcdc" text-anchor="middle">20</text>
<rect x="945.0" y="306.9" width="23.4" height="117.6" fill="url(#gb3)" stroke="#171717" stroke-width="2"/>
<text x="957.2" y="436.3" font-size="11" fill="#dcdcdc" text-anchor="middle">30</text>
<rect x="975.4" y="311.0" width="23.4" height="113.5" fill="url(#gb4)" stroke="#171717" stroke-width="2"/>
<text x="987.6" y="436.3" font-size="11" fill="#dcdcdc" text-anchor="middle">40</text>
<rect x="1004.9" y="313.5" width="23.4" height="111.0" fill="url(#gb5)" stroke="#171717" stroke-width="2"/>
<text x="1017.1" y="436.3" font-size="11" fill="#dcdcdc" text-anchor="middle">50</text>
<rect x="1034.6" y="324.3" width="23.4" height="100.2" fill="url(#gb6)" stroke="#171717" stroke-width="2"/>
<text x="1046.8" y="436.3" font-size="11" fill="#dcdcdc" text-anchor="middle">60</text>
<rect x="1063.8" y="337.9" width="23.4" height="86.6" fill="url(#gb7)" stroke="#171717" stroke-width="2"/>
<text x="1076.0" y="436.3" font-size="11" fill="#dcdcdc" text-anchor="middle">70</text>
<rect x="1093.5" y="348.7" width="23.4" height="75.8" fill="url(#gb8)" stroke="#171717" stroke-width="2"/>
<text x="1105.7" y="436.3" font-size="11" fill="#dcdcdc" text-anchor="middle">80</text>
<rect x="1123.6" y="278.7" width="23.4" height="145.8" fill="url(#gb9)" stroke="#171717" stroke-width="2"/>
<text x="1135.8" y="436.3" font-size="11" fill="#dcdcdc" text-anchor="middle">90</text>
<rect x="1153.1" y="313.5" width="23.4" height="111.0" fill="url(#gb10)" stroke="#171717" stroke-width="2"/>
<text x="1165.3" y="436.3" font-size="11" fill="#dcdcdc" text-anchor="middle">100</text>
<path d="M854.5 424 V428" stroke="#c8c8c8" stroke-width="1"/>
<path d="M884.1 424 V428" stroke="#c8c8c8" stroke-width="1"/>
<path d="M913.8 424 V428" stroke="#c8c8c8" stroke-width="1"/>
<path d="M943.4 424 V428" stroke="#c8c8c8" stroke-width="1"/>
<path d="M973.0 424 V428" stroke="#c8c8c8" stroke-width="1"/>
<path d="M1002.7 424 V428" stroke="#c8c8c8" stroke-width="1"/>
<path d="M1032.3 424 V428" stroke="#c8c8c8" stroke-width="1"/>
<path d="M1062.0 424 V428" stroke="#c8c8c8" stroke-width="1"/>
<path d="M1091.6 424 V428" stroke="#c8c8c8" stroke-width="1"/>
<path d="M1121.2 424 V428" stroke="#c8c8c8" stroke-width="1"/>
<path d="M1150.9 424 V428" stroke="#c8c8c8" stroke-width="1"/>
<path d="M1180.5 424 V428" stroke="#c8c8c8" stroke-width="1"/>
<path d="M854.5 248 H1180.5 V424 H854.5 Z" fill="none" stroke="#9a9a9a" stroke-width="1"/>
<text x="1112.0" y="263.0" font-size="17.6" fill="#fff" textLength="62.0" lengthAdjust="spacingAndGlyphs">Gamma</text>
<rect x="622.5" y="443" width="572.5" height="160" fill="#222"/>
<path d="M622 442.3 H1195.5" stroke="#8a8a8a" stroke-width="1"/>
<g clip-path="url(#clipS)">
<path d="M617.5 602.2 L627.0 602.2 L636.6 602.2 L646.1 602.2 L655.6 602.1 L665.2 602.1 L674.7 602.0 L684.2 601.8 L693.8 601.6 L703.3 601.2 L712.8 600.7 L722.3 600.2 L731.9 599.6 L741.4 598.9 L750.9 598.0 L760.5 596.9 L770.0 595.7 L779.5 594.2 L789.0 592.3 L798.6 590.0 L808.1 587.3 L817.6 583.9 L827.2 579.4 L836.7 573.7 L846.2 566.3 L855.8 557.9 L865.3 548.6 L874.8 539.6 L884.4 532.3 L893.9 526.3 L903.4 521.6 L912.9 518.2 L922.5 515.8 L932.0 514.5 L941.5 514.1 L951.1 514.5 L960.6 516.0 L970.1 518.3 L979.7 521.6 L989.2 525.6 L998.7 530.3 L1008.2 535.5 L1017.8 541.0 L1027.3 546.6 L1036.8 552.3 L1046.4 557.9 L1055.9 563.3 L1065.4 568.6 L1075.0 573.9 L1084.5 578.9 L1094.0 583.1 L1103.5 586.8 L1113.1 590.0 L1122.6 592.8 L1132.1 595.0 L1141.7 596.8 L1151.2 598.3 L1160.7 599.4 L1170.2 600.2 L1179.8 600.7 L1189.3 601.1 L1198.8 601.5" fill="none" stroke="#008000" stroke-width="2" stroke-linejoin="round"/>
<path d="M617.5 602.0 L627.0 601.8 L636.6 601.5 L646.1 600.9 L655.6 600.2 L665.2 598.4 L674.7 595.4 L684.2 590.4 L693.8 583.3 L703.3 577.2 L712.8 573.3 L722.3 571.5 L731.9 571.5 L741.4 572.6 L750.9 574.1 L760.5 576.6 L770.0 580.1 L779.5 585.0 L789.0 589.7 L798.6 593.8 L808.1 597.1 L817.6 599.4 L827.2 600.9 L836.7 601.8 L846.2 602.0 L855.8 601.4 L865.3 599.6 L874.8 596.6 L884.4 592.5 L893.9 587.6 L903.4 582.3 L912.9 576.6 L922.5 570.5 L932.0 564.0 L941.5 557.1 L951.1 549.8 L960.6 542.4 L970.1 535.1 L979.7 528.0 L989.2 521.5 L998.7 516.0 L1008.2 511.8 L1017.8 509.1 L1027.3 508.6 L1036.8 510.1 L1046.4 513.9 L1055.9 519.5 L1065.4 526.9 L1075.0 536.0 L1084.5 545.6 L1094.0 554.5 L1103.5 562.7 L1113.1 570.4 L1122.6 577.2 L1132.1 582.9 L1141.7 587.7 L1151.2 591.5 L1160.7 594.5 L1170.2 596.6 L1179.8 598.1 L1189.3 599.3 L1198.8 600.2" fill="none" stroke="#ff0000" stroke-width="2" stroke-linejoin="round"/>
<path d="M617.5 601.3 L627.0 600.4 L636.6 599.0 L646.1 596.2 L655.6 592.5 L665.2 583.9 L674.7 569.5 L684.2 545.3 L693.8 510.7 L703.3 480.1 L712.8 459.2 L722.3 448.3 L731.9 445.2 L741.4 446.1 L750.9 448.5 L760.5 455.1 L770.0 467.6 L779.5 488.8 L789.0 510.4 L798.6 530.6 L808.1 547.9 L817.6 561.2 L827.2 571.1 L836.7 578.2 L846.2 583.5 L855.8 588.3 L865.3 592.4 L874.8 595.3 L884.4 597.2 L893.9 598.5 L903.4 599.6 L912.9 600.4 L922.5 601.0 L932.0 601.4 L941.5 601.7 L951.1 601.9 L960.6 602.0 L970.1 602.0 L979.7 602.0 L989.2 602.1 L998.7 602.1 L1008.2 602.1 L1017.8 602.1 L1027.3 602.1 L1036.8 602.1 L1046.4 602.2 L1055.9 602.2 L1065.4 602.2 L1075.0 602.2 L1084.5 602.2 L1094.0 602.2 L1103.5 602.2 L1113.1 602.2 L1122.6 602.2 L1132.1 602.2 L1141.7 602.2 L1151.2 602.2 L1160.7 602.2 L1170.2 602.2 L1179.8 602.2 L1189.3 602.2 L1198.8 602.2" fill="none" stroke="#0000ff" stroke-width="2" stroke-linejoin="round"/>
<path d="M867.5 602.8 L867.5 602.8 L867.5 601.2 L868.8 601.2 L868.8 600.0 L870.4 600.0 L870.4 596.7 L871.3 596.7 L871.3 594.2 L872.1 594.2 L872.1 591.7 L872.9 591.7 L872.9 587.5 L873.3 587.5 L873.3 583.3 L874.2 583.3 L874.2 581.2 L875.0 581.2 L875.0 579.2 L875.2 579.2 L875.2 577.2 L875.4 577.2 L875.4 575.0 L876.0 575.0 L876.0 573.0 L876.7 573.0 L876.7 570.8 L876.9 570.8 L876.9 568.8 L877.1 568.8 L877.1 566.7 L878.8 566.7 L878.8 564.2 L880.0 564.2 L880.0 561.2 L881.7 561.2 L881.7 564.2 L882.9 564.2 L882.9 566.7 L885.8 566.7 L885.8 568.8 L888.4 568.8 L888.4 570.8 L890.8 570.8 L890.8 573.0 L893.0 573.0 L893.0 575.0 L895.0 575.0 L895.0 577.2 L896.8 577.2 L896.8 579.2 L898.3 579.2 L898.3 581.2 L899.6 581.2 L899.6 583.3 L900.8 583.3 L900.8 587.5 L902.1 587.5 L902.1 591.7 L902.9 591.7 L902.9 594.2 L903.8 594.2 L903.8 596.7 L904.6 596.7 L904.6 600.0 L906.2 600.0 L906.2 601.2 L907.5 601.2 L907.5 602.8Z" fill="#00ff00"/>
<path d="M1099.0 602.8 L1099.0 602.8 L1099.0 601.0 L1101.1 601.0 L1101.1 598.9 L1102.8 598.9 L1102.8 596.2 L1104.4 596.2 L1104.4 592.2 L1106.2 592.2 L1106.2 583.3 L1107.1 583.3 L1107.1 572.2 L1107.8 572.2 L1107.8 561.1 L1108.3 561.1 L1108.3 550.2 L1108.9 550.2 L1108.9 538.9 L1110.0 538.9 L1110.0 532.2 L1110.0 532.2 L1110.0 529.2 L1110.3 529.2 L1110.3 522.2 L1110.7 522.2 L1110.7 512.2 L1112.2 512.2 L1112.2 503.3 L1112.9 503.3 L1112.9 487.8 L1114.2 487.8 L1114.2 475.2 L1115.6 475.2 L1115.6 463.3 L1117.2 463.3 L1117.2 454.4 L1118.6 454.4 L1118.6 463.3 L1120.4 463.3 L1120.4 475.2 L1120.5 475.2 L1120.5 487.8 L1120.7 487.8 L1120.7 503.3 L1122.2 503.3 L1122.2 512.2 L1122.7 512.2 L1122.7 522.2 L1123.6 522.2 L1123.6 529.2 L1125.5 529.2 L1125.5 532.2 L1127.8 532.2 L1127.8 538.9 L1128.4 538.9 L1128.4 550.2 L1129.6 550.2 L1129.6 561.1 L1130.7 561.1 L1130.7 572.2 L1131.6 572.2 L1131.6 583.3 L1132.9 583.3 L1132.9 592.2 L1135.1 592.2 L1135.1 596.2 L1136.5 596.2 L1136.5 598.9 L1137.8 598.9 L1137.8 601.0 L1139.5 601.0 L1139.5 602.8Z" fill="#ff0000"/>
<path d="M748.5 602.8 L748.5 602.8 L748.5 601.0 L750.5 601.0 L750.5 599.2 L753.5 599.2 L753.5 596.7 L755.8 596.7 L755.8 593.3 L757.0 593.3 L757.0 589.2 L758.3 589.2 L758.3 583.3 L759.3 583.3 L759.3 577.2 L760.3 577.2 L760.3 570.0 L761.7 570.0 L761.7 556.7 L763.3 556.7 L763.3 545.0 L764.2 545.0 L764.2 531.7 L765.0 531.7 L765.0 522.2 L765.8 522.2 L765.8 511.7 L767.8 511.7 L767.8 503.3 L768.5 503.3 L768.5 500.0 L769.9 500.0 L769.9 503.3 L770.6 503.3 L770.6 511.7 L771.7 511.7 L771.7 522.2 L772.5 522.2 L772.5 531.7 L773.3 531.7 L773.3 545.0 L774.2 545.0 L774.2 556.7 L775.0 556.7 L775.0 570.0 L775.8 570.0 L775.8 577.2 L776.4 577.2 L776.4 583.3 L777.0 583.3 L777.0 589.2 L777.9 589.2 L777.9 593.3 L778.7 593.3 L778.7 596.7 L779.8 596.7 L779.8 599.2 L780.8 599.2 L780.8 601.0 L782.5 601.0 L782.5 602.8Z" fill="#1018ff"/>
</g>
<path d="M622.5 603.2 H1195" stroke="#9a9a9a" stroke-width="1"/>
<path d="M646.1 602.7 V606.7" stroke="#d0d0d0" stroke-width="1"/>
<text x="646.1" y="617.8" font-size="10.6" fill="#dcdcdc" text-anchor="middle">400</text>
<path d="M684.2 602.7 V606.7" stroke="#d0d0d0" stroke-width="1"/>
<text x="684.2" y="617.8" font-size="10.6" fill="#dcdcdc" text-anchor="middle">420</text>
<path d="M722.3 602.7 V606.7" stroke="#d0d0d0" stroke-width="1"/>
<text x="722.3" y="617.8" font-size="10.6" fill="#dcdcdc" text-anchor="middle">440</text>
<path d="M760.5 602.7 V606.7" stroke="#d0d0d0" stroke-width="1"/>
<text x="760.5" y="617.8" font-size="10.6" fill="#dcdcdc" text-anchor="middle">460</text>
<path d="M798.6 602.7 V606.7" stroke="#d0d0d0" stroke-width="1"/>
<text x="798.6" y="617.8" font-size="10.6" fill="#dcdcdc" text-anchor="middle">480</text>
<path d="M836.7 602.7 V606.7" stroke="#d0d0d0" stroke-width="1"/>
<text x="836.7" y="617.8" font-size="10.6" fill="#dcdcdc" text-anchor="middle">500</text>
<path d="M874.8 602.7 V606.7" stroke="#d0d0d0" stroke-width="1"/>
<text x="874.8" y="617.8" font-size="10.6" fill="#dcdcdc" text-anchor="middle">520</text>
<path d="M912.9 602.7 V606.7" stroke="#d0d0d0" stroke-width="1"/>
<text x="912.9" y="617.8" font-size="10.6" fill="#dcdcdc" text-anchor="middle">540</text>
<path d="M951.1 602.7 V606.7" stroke="#d0d0d0" stroke-width="1"/>
<text x="951.1" y="617.8" font-size="10.6" fill="#dcdcdc" text-anchor="middle">560</text>
<path d="M989.2 602.7 V606.7" stroke="#d0d0d0" stroke-width="1"/>
<text x="989.2" y="617.8" font-size="10.6" fill="#dcdcdc" text-anchor="middle">580</text>
<path d="M1027.3 602.7 V606.7" stroke="#d0d0d0" stroke-width="1"/>
<text x="1027.3" y="617.8" font-size="10.6" fill="#dcdcdc" text-anchor="middle">600</text>
<path d="M1065.4 602.7 V606.7" stroke="#d0d0d0" stroke-width="1"/>
<text x="1065.4" y="617.8" font-size="10.6" fill="#dcdcdc" text-anchor="middle">620</text>
<path d="M1103.5 602.7 V606.7" stroke="#d0d0d0" stroke-width="1"/>
<text x="1103.5" y="617.8" font-size="10.6" fill="#dcdcdc" text-anchor="middle">640</text>
<path d="M1141.7 602.7 V606.7" stroke="#d0d0d0" stroke-width="1"/>
<text x="1141.7" y="617.8" font-size="10.6" fill="#dcdcdc" text-anchor="middle">660</text>
<path d="M1179.8 602.7 V606.7" stroke="#d0d0d0" stroke-width="1"/>
<text x="1179.8" y="617.8" font-size="10.6" fill="#dcdcdc" text-anchor="middle">680</text>
<text x="1097.0" y="461.7" font-size="17.6" fill="#fff" textLength="77.5" lengthAdjust="spacingAndGlyphs">Spektrum</text>
<rect x="0" y="620.5" width="1200" height="39" fill="url(#gbar)"/>
<rect x="0" y="659.3" width="1200" height="1.6" fill="#e2e2e2"/>
<rect x="0" y="661" width="1200" height="59" fill="#2f2f2f"/>
<rect x="1" y="622.2" width="28" height="37.3" rx="2" fill="url(#gbt)"/>
<rect x="4" y="638" width="22" height="19.3" rx="1" fill="#ffff00"/>
<path d="M12 624.6 h5 v2.6 h-5 Z" fill="#4a4a4a"/>
<rect x="31.5" y="621.5" width="95" height="38" fill="#343434"/>
<rect x="33.8" y="623" width="91.6" height="25.6" rx="2" fill="#1b1b1b"/>
<rect x="36.2" y="625" width="87" height="22.4" rx="1.5" fill="#cccc88"/>
<text x="79.5" y="656.6" font-size="6.6" fill="#fff" text-anchor="middle" font-weight="bold">50%</text>
<rect x="999.5" y="621.5" width="200.5" height="38" fill="#808080"/>
<rect x="1000" y="622" width="29.5" height="11.5" fill="url(#gbt)"/>
<rect x="1000" y="634" width="29.5" height="25" fill="url(#gbt)"/>
<rect x="1005" y="637" width="19.5" height="19" rx="2" fill="#1e1e1e"/>
<path d="M1012 625.8 h5 v2.4 h-5 Z" fill="#4a4a4a"/>
<rect x="1030.4" y="622" width="29.0" height="18.3" fill="url(#gbt)" stroke="#6e6e6e" stroke-width="0.7"/>
<circle cx="1044.9" cy="631.2" r="5.6" fill="#a2a2a2" stroke="#8a8a8a" stroke-width="0.6"/>
<rect x="1059.4" y="622" width="28.0" height="18.3" fill="url(#gbt)" stroke="#6e6e6e" stroke-width="0.7"/>
<circle cx="1073.4" cy="631.2" r="5.6" fill="#a2a2a2" stroke="#8a8a8a" stroke-width="0.6"/>
<rect x="1087.4" y="622" width="28.2" height="18.3" fill="url(#gbt)" stroke="#6e6e6e" stroke-width="0.7"/>
<circle cx="1101.5" cy="631.2" r="5.6" fill="#a2a2a2" stroke="#8a8a8a" stroke-width="0.6"/>
<rect x="1115.6" y="622" width="27.8" height="18.3" fill="url(#gbt)" stroke="#6e6e6e" stroke-width="0.7"/>
<circle cx="1129.5" cy="631.2" r="5.6" fill="#a2a2a2" stroke="#8a8a8a" stroke-width="0.6"/>
<rect x="1143.4" y="622" width="28.6" height="18.3" fill="url(#gbt)" stroke="#6e6e6e" stroke-width="0.7"/>
<circle cx="1157.7" cy="631.2" r="5.6" fill="#a2a2a2" stroke="#8a8a8a" stroke-width="0.6"/>
<rect x="1172.0" y="622" width="28.5" height="18.3" fill="url(#gbt)" stroke="#6e6e6e" stroke-width="0.7"/>
<circle cx="1186.2" cy="631.2" r="5.6" fill="#a2a2a2" stroke="#8a8a8a" stroke-width="0.6"/>
<rect x="1042.7" y="629" width="4.4" height="4.4" fill="#2c2c2c"/>
<path d="M1071.4 627.8 v6.8 l5 -3.4 Z" fill="#2c2c2c"/>
<text x="1101.5" y="635.0" font-size="10.5" fill="#2c2c2c" text-anchor="middle">H</text>
<text x="1129.5" y="634.8" font-size="11.5" fill="#2c2c2c" text-anchor="middle" font-weight="bold">∞</text>
<path d="M1154.7 631.2 a3 3 0 1 1 3 3" fill="none" stroke="#2c2c2c" stroke-width="1.7"/><path d="M1160.7 631.2 a3 3 0 0 0 -3 -3" fill="none" stroke="#2c2c2c" stroke-width="1.7"/>
<path d="M1183.7 631.4 l1.8 2 l3.2 -4.2" fill="none" stroke="#2c2c2c" stroke-width="1.6"/>
<rect x="1030.4" y="640.8" width="85" height="18.4" fill="url(#gbt)" stroke="#6e6e6e" stroke-width="0.7"/>
<rect x="1115.6" y="640.8" width="85" height="18.4" fill="url(#gbt)" stroke="#6e6e6e" stroke-width="0.7"/>
<circle cx="1049.5" cy="650.5" r="5.3" fill="#9c9c9c" stroke="#888" stroke-width="0.6"/>
<circle cx="1183" cy="650.5" r="5.3" fill="#9c9c9c" stroke="#888" stroke-width="0.6"/>
<text x="1049.5" y="653.3" font-size="10" fill="#2a2a2a" text-anchor="middle" font-weight="bold">«</text>
<text x="1183.0" y="653.3" font-size="10" fill="#2a2a2a" text-anchor="middle" font-weight="bold">»</text>
<text x="1066.0" y="655.6" font-size="13.6" fill="#242424" textLength="31.6" lengthAdjust="spacingAndGlyphs">Back</text>
<text x="1133.0" y="655.6" font-size="13.6" fill="#242424" textLength="32.0" lengthAdjust="spacingAndGlyphs">Next</text>
<text x="13.0" y="706.3" font-size="23.7" fill="#fff" textLength="196.5" lengthAdjust="spacingAndGlyphs" style="filter:drop-shadow(0 0 1.5px rgba(0,0,0,0.8))">© connect / TestLab</text></svg>
</body></html>
